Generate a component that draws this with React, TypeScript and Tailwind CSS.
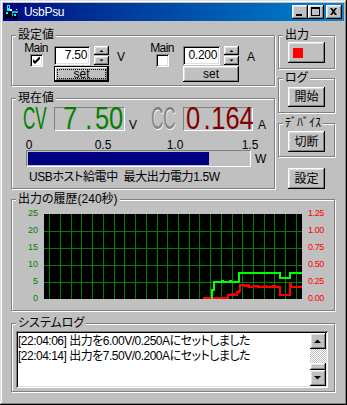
import React from "react";

const raised =
  "bg-[#c0c0c0] shadow-[inset_-1px_-1px_#000,inset_1px_1px_#fff,inset_-2px_-2px_#808080,inset_2px_2px_#dfdfdf]";
const sunken =
  "shadow-[inset_1px_1px_#808080,inset_-1px_-1px_#fff,inset_2px_2px_#000,inset_-2px_-2px_#dfdfdf]";
const groupCls =
  "relative border border-[#808080] shadow-[inset_1px_1px_#fff,1px_1px_#fff]";
const staticEdge =
  "border border-t-[#808080] border-l-[#808080] border-b-white border-r-white";

function Group({
  label,
  className = "",
  children,
}: {
  label: string;
  className?: string;
  children?: React.ReactNode;
}) {
  return (
    <div className={`${groupCls} ${className}`}>
      <span className="absolute left-[4px] top-[-8px] px-[2px] bg-[#c0c0c0] leading-[14px] whitespace-nowrap">
        {label}
      </span>
      {children}
    </div>
  );
}

function Checkbox({ checked }: { checked?: boolean }) {
  return (
    <div className={`w-[13px] h-[13px] bg-white ${sunken} flex items-center justify-center`}>
      {checked && (
        <svg width="7" height="7" viewBox="0 0 7 7">
          <path d="M0 2 L2 4 L6 0 L7 0 L7 2 L2 7 L0 5 Z" fill="#000" />
        </svg>
      )}
    </div>
  );
}

function Spin() {
  return (
    <div className="ml-[4px] w-[15px] flex flex-col gap-[1px]">
      <div className={`h-[9px] ${raised} flex items-center justify-center`}>
        <svg width="15" height="9" viewBox="0 0 15 9">
          <polygon points="5.5,6 9.5,6 7.5,4" fill="#000" />
        </svg>
      </div>
      <div className={`h-[9px] ${raised} flex items-center justify-center`}>
        <svg width="15" height="9" viewBox="0 0 15 9">
          <polygon points="5.5,3.5 9.5,3.5 7.5,5.5" fill="#000" />
        </svg>
      </div>
    </div>
  );
}

function Btn({ className = "", children }: { className?: string; children?: React.ReactNode }) {
  return (
    <div className={`${raised} flex items-center justify-center leading-[14px] ${className}`}>
      {children}
    </div>
  );
}

function TitleBtn({ kind, className = "" }: { kind: "min" | "max" | "close"; className?: string }) {
  return (
    <div className={`w-[16px] h-[14px] ${raised} ${className}`}>
      <svg width="16" height="14" viewBox="0 0 16 14">
        {kind === "min" && <rect x="4" y="9" width="6" height="2" fill="#000" />}
        {kind === "max" && (
          <g>
            <rect x="3.5" y="2.5" width="8" height="8" fill="none" stroke="#000" />
            <rect x="3" y="2" width="9" height="2" fill="#000" />
          </g>
        )}
        {kind === "close" && (
          <path
            d="M4 3 H6 L7.5 5 L9 3 H11 L8.5 6.5 L11 10 H9 L7.5 8 L6 10 H4 L6.5 6.5 Z"
            fill="#000"
          />
        )}
      </svg>
    </div>
  );
}

function ScrollBtn({ up }: { up?: boolean }) {
  return (
    <div className={`w-[16px] h-[16px] ${raised}`}>
      <svg width="16" height="16" viewBox="0 0 16 16">
        {up ? (
          <polygon points="4,10 11,10 7.5,6.5" fill="#000" />
        ) : (
          <polygon points="4,6 11,6 7.5,9.5" fill="#000" />
        )}
      </svg>
    </div>
  );
}

const vLines = Array.from({ length: 24 }, (_, i) => Math.round(5.3 + 10.72 * i) + 0.5);
const hLines = [17.5, 34.5, 51.5, 68.5];

function Plot() {
  return (
    <svg width="258" height="85" viewBox="0 0 258 85" className="block">
      <rect x="0" y="0" width="258" height="85" fill="#000" />
      {vLines.map((x) => (
        <line key={"v" + x} x1={x} y1="0" x2={x} y2="85" stroke="#008000" strokeWidth="1" />
      ))}
      {hLines.map((y) => (
        <line key={"h" + y} x1="0" y1={y} x2="258" y2={y} stroke="#008000" strokeWidth="1" />
      ))}
      <path
        d="M159 84 H184 V81 H188 V80 H190 V81 H193 V78 H195 V77 H196 V71 H200 V72 H203 V71 H205 V73 H209 V72 H214 V73 H220 V72 H222 V73 H229 V72 H231 V73 H236 V81 H246 V70 H247 V73 H258"
        fill="none"
        stroke="#ff0000"
        strokeWidth="2"
      />
      <path
        d="M168 85 V76 H170 V68 H178 V67 H179 V68 H186 V67 H187 V68 H195 V59 H236 V64 H246 V59 H258"
        fill="none"
        stroke="#00ff00"
        strokeWidth="2"
      />
    </svg>
  );
}

export default function App() {
  return (
    <div className="w-[347px] h-[405px] bg-[#c0c0c0] p-[3px] flex flex-col text-[12px] text-black font-['Liberation_Sans','Noto_Sans_CJK_JP',sans-serif] [font-feature-settings:'palt'] shadow-[inset_-1px_-1px_#000,inset_1px_1px_#dfdfdf,inset_-2px_-2px_#808080,inset_2px_2px_#fff]">
      {/* Title bar */}
      <div className="h-[18px] flex items-center bg-linear-to-r from-[#000080] to-[#1084d0] pr-[2px]">
        <svg width="16" height="16" viewBox="0 0 16 16" className="ml-[1px]">
          <rect x="3" y="1" width="3" height="7" fill="#00ffff" />
          <rect x="4" y="2" width="1" height="2" fill="#000080" />
          <rect x="1" y="7" width="6" height="7" fill="#000" />
          <rect x="2" y="8" width="2" height="2" fill="#00ffff" />
          <rect x="6" y="5" width="2" height="2" fill="#fff" />
          <rect x="8" y="7" width="6" height="5" fill="#00c0c0" />
          <rect x="9" y="9" width="5" height="6" fill="#000" />
          <rect x="10" y="10" width="2" height="2" fill="#00ffff" />
          <rect x="12" y="5" width="1" height="1" fill="#fff" />
        </svg>
        <span className="ml-[4px] text-white text-[12px] leading-[14px] tracking-[-0.3px]">UsbPsu</span>
        <div className="flex-1" />
        <TitleBtn kind="min" />
        <TitleBtn kind="max" />
        <TitleBtn kind="close" className="ml-[2px]" />
      </div>

      {/* Client */}
      <div className="flex-1 pl-[8px] pr-[9px] pt-[14px] flex flex-col">
        <div className="flex gap-[3px]">
          {/* Left column */}
          <div className="w-[264px] flex flex-col">
            <Group label="設定値" className="h-[51px]">
              <div className="flex items-start pl-[13px] pt-[7px]">
                <div className="w-[22px] flex flex-col items-center">
                  <span className="leading-[11px] tracking-[-0.6px] whitespace-nowrap">Main</span>
                  <Checkbox checked />
                </div>
                <div className="ml-[7px] mt-[3px] flex flex-col">
                  <div className="flex">
                    <div className={`w-[36px] h-[19px] bg-white ${sunken} text-right pr-[3px] leading-[19px] tracking-[-0.3px]`}>
                      7.50
                    </div>
                    <Spin />
                  </div>
                  <div className="mt-[1px] w-[55px] h-[16px] border border-black relative">
                    <div className="w-full h-full bg-[#c0c0c0] shadow-[inset_-1px_-1px_#000,inset_1px_1px_#fff,inset_-2px_-2px_#808080] flex items-center justify-center leading-[12px]">
                      set
                    </div>
                    <div className="absolute inset-[2px] border border-dotted border-black" />
                  </div>
                </div>
                <span className="ml-[8px] mt-[8px] leading-[12px]">V</span>
                <div className="ml-[26px] w-[22px] flex flex-col items-center">
                  <span className="leading-[11px] tracking-[-0.6px] whitespace-nowrap">Main</span>
                  <Checkbox />
                </div>
                <div className="ml-[10px] mt-[3px] flex flex-col">
                  <div className="flex">
                    <div className={`w-[37px] h-[19px] bg-white ${sunken} text-right pr-[3px] leading-[19px] tracking-[-0.3px]`}>
                      0.200
                    </div>
                    <Spin />
                  </div>
                  <Btn className="mt-[1px] w-[56px] h-[16px]">set</Btn>
                </div>
                <span className="ml-[8px] mt-[8px] leading-[12px]">A</span>
              </div>
            </Group>

            <Group label="現在値" className="mt-[12px] h-[91px]">
              <div className="flex items-end pt-[8px]">
                <div className="ml-[11px] w-[25px] h-[24px] text-[31px] leading-[24px] text-[#008000]">
                  <span className="inline-block origin-left scale-x-[0.55] whitespace-nowrap">CV</span>
                </div>
                <div className={`ml-[6px] w-[71px] h-[24px] ${staticEdge} text-[#008000] text-[31px] leading-[22px] whitespace-nowrap pl-[8px]`}>
                  <span className="inline-block origin-left scale-x-[0.82]">
                    7<span className="ml-[10px]">.</span>
                    <span className="ml-[3px]">50</span>
                  </span>
                </div>
                <span className="ml-[4px] leading-[12px]">V</span>
                <div className="ml-[14px] w-[25px] h-[24px] text-[31px] leading-[24px] text-[#808080] [text-shadow:1px_1px_0_#fff]">
                  <span className="inline-block origin-left scale-x-[0.55] whitespace-nowrap">CC</span>
                </div>
                <div className={`ml-[7px] w-[70px] h-[24px] ${staticEdge} text-[#800000] text-[31px] leading-[22px] whitespace-nowrap pl-[2px]`}>
                  <span className="inline-block origin-left scale-x-[0.82]">
                    0<span className="ml-[4px]">.</span>
                    <span className="ml-[1px]">164</span>
                  </span>
                </div>
                <span className="ml-[5px] leading-[12px]">A</span>
              </div>
              <div className="mt-[8px] h-[11px] leading-[12px] flex">
                <span className="ml-[2px] w-[30px] text-center">0</span>
                <span className="ml-[44px] w-[30px] text-center">0.5</span>
                <span className="ml-[42px] w-[30px] text-center">1.0</span>
                <span className="ml-[45px] w-[30px] text-center">1.5</span>
              </div>
              <div className="ml-[14px] flex items-center">
                <div className={`w-[225px] h-[17px] ${staticEdge} p-[1px]`}>
                  <div className="h-full w-[181px] bg-[#000080]" />
                </div>
                <span className="ml-[4px] leading-[12px]">W</span>
              </div>
              <div className="mt-[3px] ml-[17px] leading-[14px] whitespace-pre tracking-[-0.4px]">
                USBホスト給電中  最大出力電力1.5W
              </div>
            </Group>
          </div>

          {/* Right column */}
          <div className="w-[57px] flex flex-col">
            <Group label="出力" className="h-[34px]">
              <div className={`ml-[9px] mt-[6px] w-[37px] h-[21px] ${raised} flex items-center pl-[5px]`}>
                <div className="w-[10px] h-[10px] bg-[#ff0000]" />
              </div>
            </Group>
            <Group label="ログ" className="mt-[9px] h-[35px]">
              <Btn className="ml-[9px] mt-[8px] w-[37px] h-[20px]">開始</Btn>
            </Group>
            <Group label="ﾃﾞﾊﾞｲｽ" className="mt-[10px] h-[34px]">
              <Btn className="ml-[9px] mt-[7px] w-[37px] h-[21px]">切断</Btn>
            </Group>
            <Btn className="mt-[11px] ml-[10px] w-[37px] h-[21px]">設定</Btn>
          </div>
        </div>

        {/* History */}
        <Group label="出力の履歴(240秒)" className="mt-[10px] h-[112px]">
          <div className="flex items-start pt-[14px]">
            <div className="w-[26px] mt-[-9px] flex flex-col text-right text-[9px] text-[#008000]">
              {["25", "20", "15", "10", "5", "0"].map((l) => (
                <span key={l} className="h-[17px] leading-[17px]">
                  {l}
                </span>
              ))}
            </div>
            <div className="ml-[6px]">
              <Plot />
            </div>
            <div className="ml-[6px] mt-[-9px] flex flex-col text-[9px] text-[#ff0000] tracking-[-0.4px]">
              {["1.25", "1.00", "0.75", "0.50", "0.25", "0.00"].map((l) => (
                <span key={l} className="h-[17px] leading-[17px]">
                  {l}
                </span>
              ))}
            </div>
          </div>
        </Group>

        {/* System log */}
        <Group label="システムログ" className="mt-[12px] h-[69px]">
          <div className={`ml-[4px] mt-[7px] w-[312px] h-[57px] bg-white ${sunken} p-[2px] flex`}>
            <div className="flex-1 pt-[1px] leading-[15px] whitespace-nowrap overflow-hidden tracking-[-0.5px]">
              <div>[22:04:06] 出力を6.00V/0.250Aにセットしました</div>
              <div>[22:04:14] 出力を7.50V/0.200Aにセットしました</div>
            </div>
            <div className="w-[16px] flex flex-col">
              <ScrollBtn up />
              <div className="h-[14px] bg-[repeating-conic-gradient(#c0c0c0_0%_25%,#ffffff_0%_50%)] bg-[length:2px_2px]" />
              <div className={`h-[7px] ${raised}`} />
              <ScrollBtn />
            </div>
          </div>
        </Group>
      </div>
    </div>
  );
}
